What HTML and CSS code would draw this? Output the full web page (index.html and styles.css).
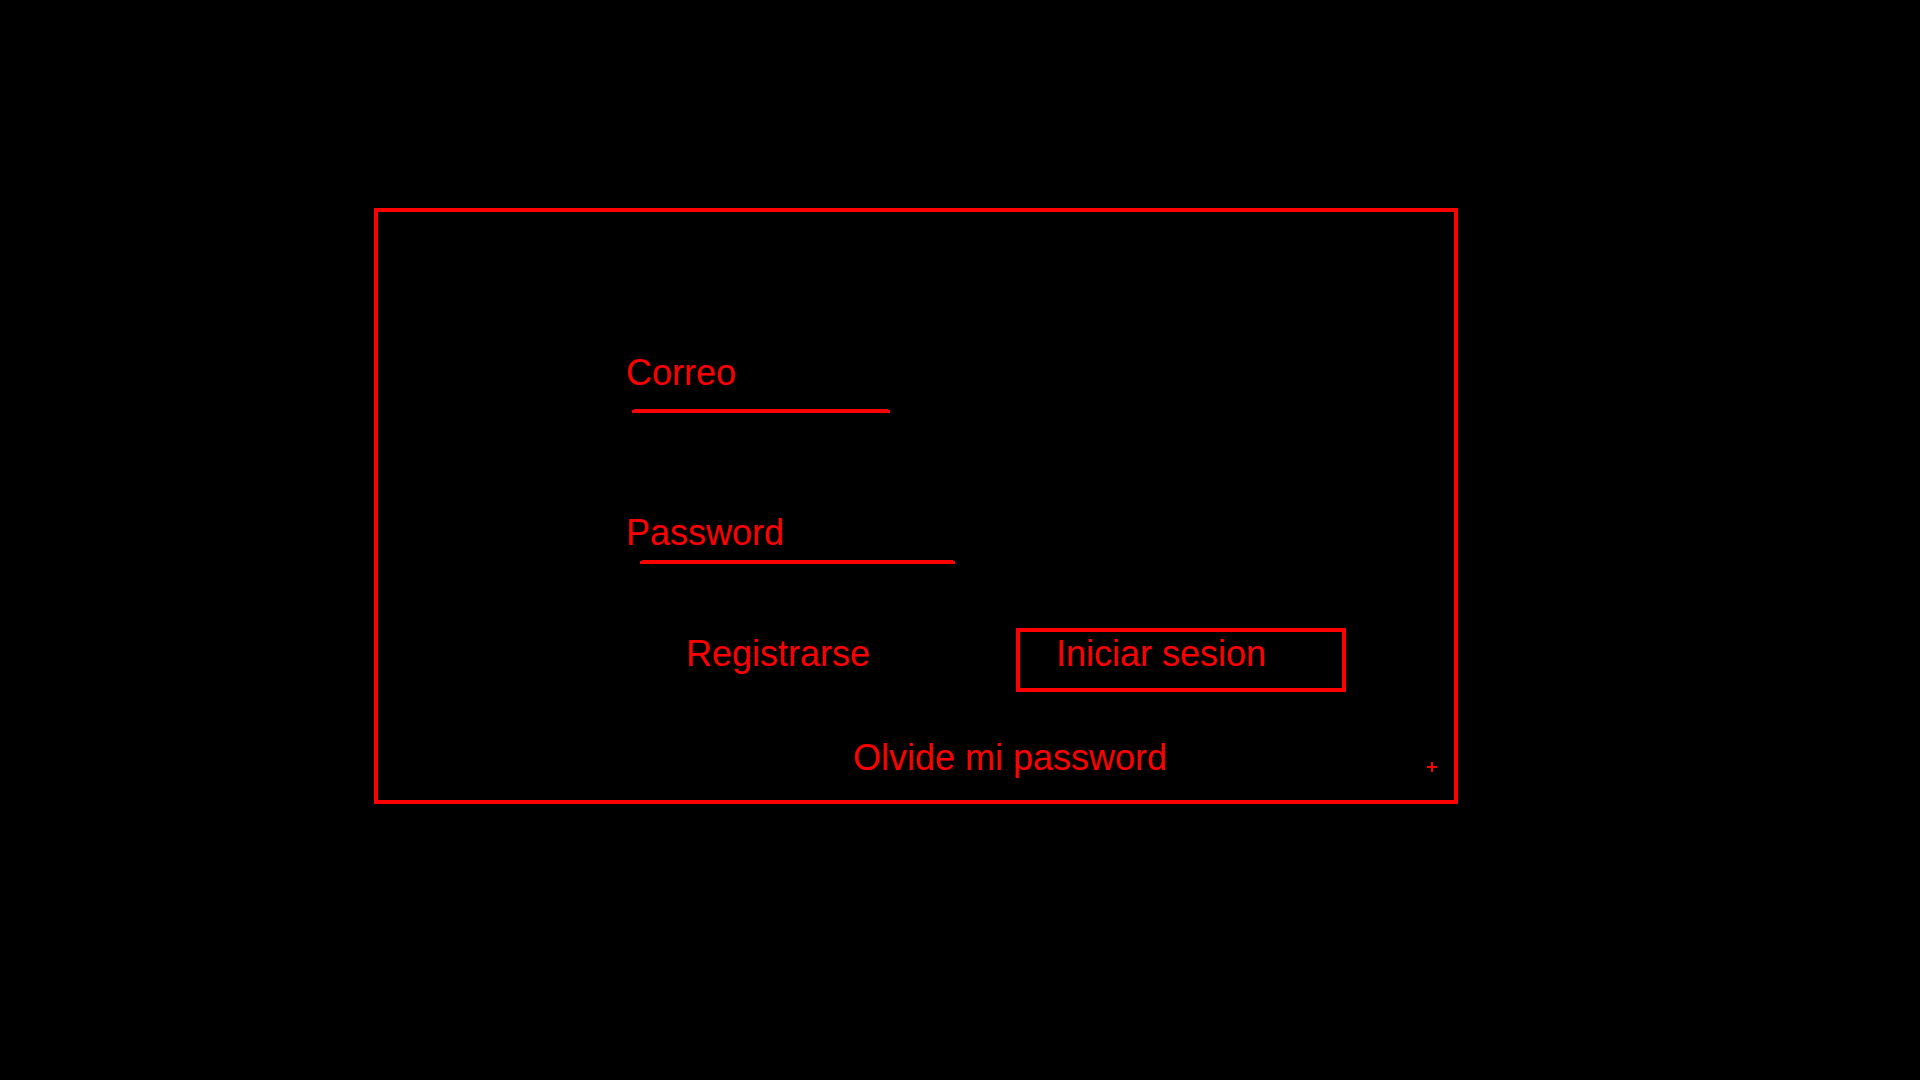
FILE: index.html
```html
<!DOCTYPE html>
<html lang="es">
<head>
<meta charset="utf-8">
<meta name="viewport" content="width=device-width, initial-scale=1">
<title>Iniciar sesion</title>
<link rel="stylesheet" href="styles.css">
</head>
<body>
<main class="page">
  <form class="panel">
    <div class="field field-email">
      <label class="field-label" for="email">Correo</label>
      <input class="field-input" id="email" type="email" autocomplete="email">
    </div>
    <div class="field field-password">
      <label class="field-label" for="password">Password</label>
      <input class="field-input" id="password" type="password" autocomplete="current-password">
    </div>
    <div class="actions">
      <a class="link" href="#registro">Registrarse</a>
      <button class="submit" type="submit">Iniciar sesion</button>
    </div>
    <div class="footer">
      <a class="link" href="#recuperar">Olvide mi password</a>
      <svg class="plus" viewBox="0 0 10 10" aria-hidden="true"><path d="M4 0h2v4h4v2H6v4H4V6H0V4h4z"/></svg>
    </div>
  </form>
</main>
</body>
</html>
```
FILE: styles.css
```css
* {
  box-sizing: border-box;
}

body {
  margin: 0;
  background: #000;
  color: #f00;
  font: 36px/40px "Liberation Sans", Arial, sans-serif;
}

.page {
  padding: 208px 462px 208px 374px;
}

.panel {
  display: flex;
  flex-direction: column;
  padding: 141px 0 22px;
  border: 4px solid #f00;
}

/* The label sits inside the input's own area, above its underline. */
.field {
  display: grid;
  margin-left: 248px;
}

.field-label,
.field-input {
  grid-area: 1 / 1;
}

.field-label {
  justify-self: start;
  align-self: start;
}

/* The underline is two stacked strips, which gives it softened top corners. */
.field-input {
  margin: 0;
  padding: 0 0 4px;
  border: 0;
  background:
    linear-gradient(#f00, #f00) center bottom / 100% 3px no-repeat,
    linear-gradient(#f00, #f00) center bottom / calc(100% - 4px) 4px no-repeat;
  color: inherit;
  font: inherit;
  outline: none;
}

.field-email {
  margin-bottom: 100px;
}

.field-email .field-input {
  width: 258px;
  height: 60px;
  margin-left: 6px;
}

.field-password {
  margin-bottom: 64px;
}

.field-password .field-input {
  width: 315px;
  height: 51px;
  margin-left: 14px;
}

.actions {
  display: flex;
  justify-content: space-between;
  align-items: baseline;
  margin-bottom: 46px;
  padding: 0 108px 0 308px;
}

.link {
  color: inherit;
  text-decoration: none;
}

.submit {
  width: 330px;
  padding: 2px 36px 14px;
  border: 4px solid #f00;
  border-radius: 0;
  background: transparent;
  color: inherit;
  font: inherit;
  text-align: left;
  cursor: pointer;
}

.footer {
  display: flex;
  justify-content: space-between;
  align-items: flex-end;
  padding: 0 17px 0 475px;
}

.plus {
  width: 10px;
  height: 10px;
  margin-bottom: 6px;
  fill: #f00;
}
```
